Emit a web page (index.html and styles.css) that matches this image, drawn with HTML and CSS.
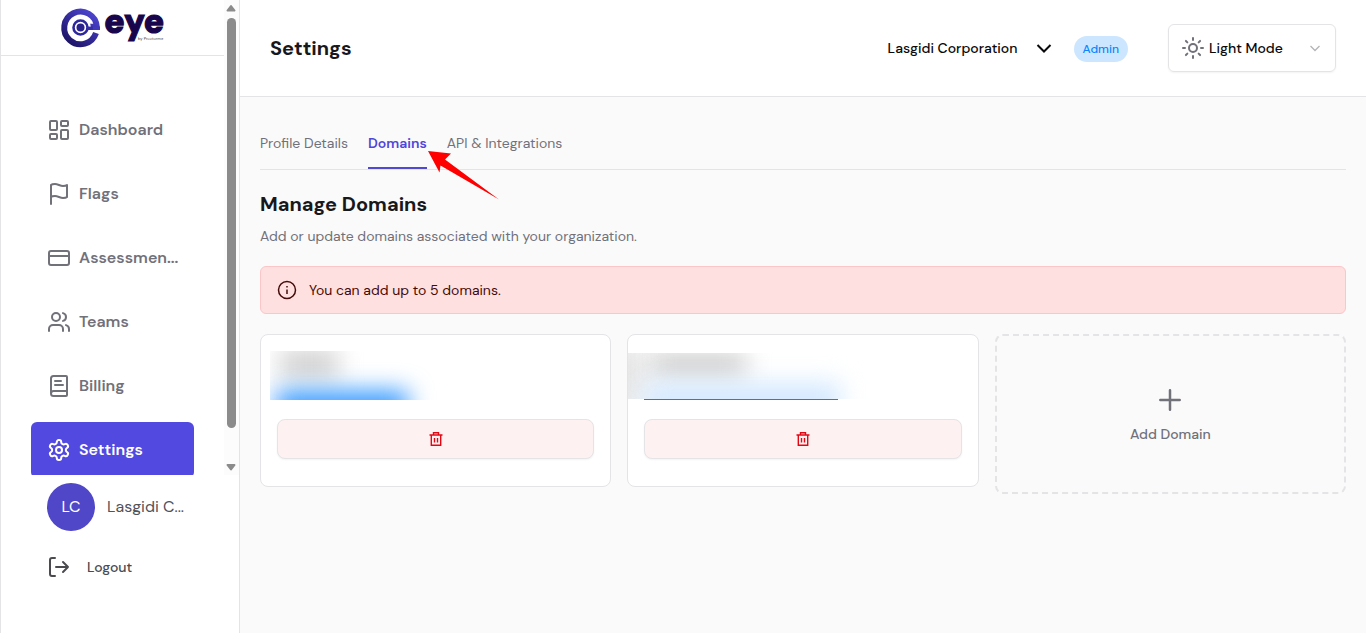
FILE: index.html
```html
<!DOCTYPE html>
<html lang="en">
<head>
<meta charset="utf-8">
<meta name="viewport" content="width=device-width, initial-scale=1">
<title>Settings</title>
<link rel="stylesheet" href="styles.css">
</head>
<body>
<div class="app">
  <aside class="sidebar">
    <div class="sidebar-scroll">
      <div class="sidebar-content">
        <a class="brand" href="#" aria-label="eye by Proctorme">
          <svg class="logo" width="108" height="40" viewBox="0 0 108 40">
            <defs>
              <linearGradient id="ring" x1="1" y1="0" x2="0.2" y2="1">
                <stop offset="0" stop-color="#5048d8"/>
                <stop offset="1" stop-color="#1e1468"/>
              </linearGradient>
            </defs>
            <path d="M35 25A16.300 16.300 0 1 1 35.800 18.800H26" fill="none" stroke="url(#ring)" stroke-width="6"/>
            <path d="M26 20.300h13" stroke="#4038bd" stroke-width="3.400"/>
            <circle cx="19.500" cy="19.500" r="10.300" fill="#fff"/>
            <circle cx="19.500" cy="19.500" r="7" fill="none" stroke="#2e269c" stroke-width="2.600"/>
            <circle cx="19.500" cy="19.500" r="4" fill="#2b218d"/>
            <path d="M26 20.300h6" stroke="#352caa" stroke-width="3.400"/>
            <text class="brand-name" x="43" y="25">eye</text>
            <text class="brand-by" x="77" y="32">by Proctorme</text>
          </svg>
        </a>
        <nav class="nav">
          <a class="nav-item" href="#">
            <svg class="icon" viewBox="0 0 24 24"><rect x="3" y="3" width="7" height="9" rx="1"/><rect x="14" y="3" width="7" height="5" rx="1"/><rect x="14" y="12" width="7" height="9" rx="1"/><rect x="3" y="16" width="7" height="5" rx="1"/></svg>
            <span class="nav-label">Dashboard</span>
          </a>
          <a class="nav-item" href="#">
            <svg class="icon" viewBox="0 0 24 24"><path d="M4 15s1-1 4-1 5 2 8 2 4-1 4-1V3s-1 1-4 1-5-2-8-2-4 1-4 1zM4 22v-7"/></svg>
            <span class="nav-label">Flags</span>
          </a>
          <a class="nav-item" href="#">
            <svg class="icon" viewBox="0 0 24 24"><rect x="2" y="5" width="20" height="14" rx="2"/><path d="M2 10h20"/></svg>
            <span class="nav-label">Assessmen...</span>
          </a>
          <a class="nav-item" href="#">
            <svg class="icon" viewBox="0 0 24 24"><path d="M16 21v-2a4 4 0 0 0-4-4H6a4 4 0 0 0-4 4v2"/><circle cx="9" cy="7" r="4"/><path d="M22 21v-2a4 4 0 0 0-3-3.870M16 3.130a4 4 0 0 1 0 7.750"/></svg>
            <span class="nav-label">Teams</span>
          </a>
          <a class="nav-item" href="#">
            <svg class="icon" viewBox="0 0 24 24"><path d="M4 19.500v-15A2.500 2.500 0 0 1 6.500 2H19a1 1 0 0 1 1 1v18a1 1 0 0 1-1 1H6.500a2.500 2.500 0 0 1-2.500-2.500A2.500 2.500 0 0 1 6.500 17H20M8 7h6M8 11h8"/></svg>
            <span class="nav-label">Billing</span>
          </a>
          <a class="nav-item nav-item-active" href="#" aria-current="page">
            <svg class="icon" viewBox="0 0 24 24"><path d="M12.220 2h-.440a2 2 0 0 0-2 2v.180a2 2 0 0 1-1 1.730l-.430.250a2 2 0 0 1-2 0l-.150-.080a2 2 0 0 0-2.730.730l-.220.380a2 2 0 0 0 .730 2.730l.150.100a2 2 0 0 1 1 1.720v.510a2 2 0 0 1-1 1.740l-.150.090a2 2 0 0 0-.730 2.730l.220.380a2 2 0 0 0 2.730.730l.150-.080a2 2 0 0 1 2 0l.430.250a2 2 0 0 1 1 1.730V20a2 2 0 0 0 2 2h.440a2 2 0 0 0 2-2v-.180a2 2 0 0 1 1-1.730l.430-.250a2 2 0 0 1 2 0l.150.080a2 2 0 0 0 2.730-.730l.220-.390a2 2 0 0 0-.730-2.730l-.150-.080a2 2 0 0 1-1-1.740v-.500a2 2 0 0 1 1-1.740l.150-.090a2 2 0 0 0 .730-2.730l-.220-.380a2 2 0 0 0-2.730-.730l-.150.080a2 2 0 0 1-2 0l-.430-.250a2 2 0 0 1-1-1.730V4a2 2 0 0 0-2-2z"/><circle cx="12" cy="12" r="3"/></svg>
            <span class="nav-label">Settings</span>
          </a>
        </nav>
      </div>
      <div class="scrollbar" aria-hidden="true">
        <svg width="10" height="8" viewBox="0 0 10 8"><path d="M5 2L8.500 6.500h-7z"/></svg>
        <div class="scrollbar-track"><div class="scrollbar-thumb"></div></div>
        <svg width="10" height="8" viewBox="0 0 10 8"><path d="M5 6.500L8.500 2h-7z"/></svg>
      </div>
    </div>
    <div class="account">
      <span class="avatar">LC</span>
      <span class="account-name">Lasgidi C...</span>
    </div>
    <button class="logout" type="button">
      <svg class="icon" viewBox="0 0 24 24"><path d="M8 3H5a2 2 0 0 0-2 2v14a2 2 0 0 0 2 2h3M9 12h12M16 7l5 5-5 5"/></svg>
      <span>Logout</span>
    </button>
  </aside>

  <div class="page">
    <header class="topbar">
      <h1 class="title">Settings</h1>
      <div class="org">
        <select class="org-select" aria-label="Organization"><option>Lasgidi Corporation</option></select>
        <svg class="org-chevron" viewBox="0 0 16 16"><path d="M1.500 5L8 11.500 14.500 5"/></svg>
      </div>
      <span class="badge">Admin</span>
      <div class="mode">
        <svg class="icon" viewBox="0 0 24 24"><circle cx="12" cy="12" r="4"/><path d="M12 2v2M12 20v2M4.930 4.930l1.410 1.410M17.660 17.660l1.410 1.410M2 12h2M20 12h2M6.340 17.660l-1.410 1.410M19.070 4.930l-1.410 1.410"/></svg>
        <select class="mode-select" aria-label="Theme"><option>Light Mode</option></select>
        <svg class="mode-chevron" viewBox="0 0 16 16"><path d="M3.500 6L8 10.500 12.500 6"/></svg>
      </div>
    </header>

    <main class="content">
      <nav class="tabs">
        <a class="tab" href="#">Profile Details</a>
        <a class="tab tab-active" href="#" aria-current="true">Domains
          <svg class="pointer" width="72" height="50" viewBox="0 0 72 50" aria-hidden="true"><path d="M0 0L23 2.500 17 8.500 71 48.500 12.500 14.500 11.500 21.500z"/></svg>
        </a>
        <a class="tab" href="#">API &amp; Integrations</a>
      </nav>
      <h2 class="heading">Manage Domains</h2>
      <p class="subheading">Add or update domains associated with your organization.</p>
      <div class="alert">
        <svg class="alert-icon" viewBox="0 0 20 20"><circle cx="10" cy="10" r="8.500"/><path d="M10 9.500v4.500M10 6v1.500"/></svg>
        <span>You can add up to 5 domains.</span>
      </div>
      <div class="domains">
        <article class="domain">
          <div class="domain-info">
            <div class="redacted redacted-first"><i class="smear smear-name"></i><i class="smear smear-link"></i></div>
          </div>
          <button class="delete" type="button" aria-label="Delete domain">
            <svg class="trash" viewBox="0 0 16 16"><path d="M1.500 4h13M5.500 4V1.700h5V4M3.300 4v10.300h9.400V4M6.500 7v4.500M9.500 7v4.500"/></svg>
          </button>
        </article>
        <article class="domain">
          <div class="domain-info">
            <div class="redacted redacted-second"><i class="smear smear-edge"></i><i class="smear smear-name"></i><i class="smear smear-link"></i></div>
            <div class="link-line"></div>
          </div>
          <button class="delete" type="button" aria-label="Delete domain">
            <svg class="trash" viewBox="0 0 16 16"><path d="M1.500 4h13M5.500 4V1.700h5V4M3.300 4v10.300h9.400V4M6.500 7v4.500M9.500 7v4.500"/></svg>
          </button>
        </article>
        <button class="add" type="button">
          <svg class="plus" viewBox="0 0 32 32"><path d="M16 6.300v19.400M6.300 16h19.400"/></svg>
          <span>Add Domain</span>
        </button>
      </div>
    </main>
  </div>
</div>
</body>
</html>
```
FILE: styles.css
```css
* { box-sizing: border-box; }

body {
  margin: 0;
  background: #fafafa;
  color: #18181b;
  font-family: "DM Sans", Inter, "Liberation Sans", sans-serif;
  font-size: 14px;
  line-height: 20px;
}

a { color: inherit; text-decoration: none; }
button, select { font: inherit; color: inherit; }
h1, h2, p { margin: 0; }

.app { display: flex; min-height: 100vh; }

.icon {
  width: 24px;
  height: 24px;
  flex: none;
  fill: none;
  stroke: currentColor;
  stroke-width: 2;
  stroke-linecap: round;
  stroke-linejoin: round;
}

/* Sidebar */
.sidebar {
  flex: none;
  width: 240px;
  background: #fff;
  border: solid #e4e4e7;
  border-width: 0 1px;
}
.sidebar-scroll { display: flex; height: 475px; overflow: hidden; }
.sidebar-content { flex: 1; min-width: 0; }
.brand {
  display: flex;
  height: 56px;
  padding: 8px 0 0 60px;
  border-bottom: 1px solid #e4e4e7;
}
.logo { overflow: visible; }
.brand-name {
  font: 900 34px "DM Sans", Inter, sans-serif;
  fill: #18054c;
  stroke: #18054c;
  stroke-width: 1.2;
}
.brand-by { font: 4px "DM Sans", Inter, sans-serif; fill: #444; }
.nav {
  display: flex;
  flex-direction: column;
  gap: 8px;
  padding: 46px 30px 0;
}
.nav-item {
  display: flex;
  align-items: center;
  gap: 8px;
  height: 56px;
  padding: 0 16px;
  border-radius: 6px;
  color: #71717a;
  font-size: 16px;
  font-weight: 600;
}
.nav-label { white-space: nowrap; }
.nav-item-active { background: #5149e0; color: #fff; }

.scrollbar {
  display: flex;
  flex-direction: column;
  align-items: center;
  flex: none;
  width: 15px;
  padding: 4px 1px 4px 0;
  background: #fcfcfc;
}
.scrollbar svg {
  fill: #8b8b8b;
  stroke: #8b8b8b;
  stroke-width: 2;
  stroke-linejoin: round;
}
.scrollbar-track { flex: 1; padding-top: 6px; }
.scrollbar-thumb { width: 9px; height: 410px; border-radius: 5px; background: #8b8b8b; }

.account {
  display: flex;
  align-items: center;
  gap: 12px;
  padding: 8px 16px 0 46px;
  color: #52525b;
  font-size: 16px;
}
.avatar {
  display: grid;
  place-items: center;
  width: 48px;
  height: 48px;
  border-radius: 50%;
  background: #4f46c8;
  color: #fff;
}
.logout {
  display: flex;
  align-items: center;
  gap: 16px;
  margin-top: 24px;
  padding: 0 46px;
  border: 0;
  background: none;
  color: #4b4b4f;
  font-weight: 500;
}

/* Top bar */
.page { flex: 1; min-width: 0; }
.topbar {
  display: flex;
  align-items: center;
  height: 97px;
  padding: 0 30px;
  background: #fff;
  border-bottom: 1px solid #e4e4e7;
}
.title { flex: 1; font-size: 20px; line-height: 28px; font-weight: 700; }
.org { display: flex; align-items: center; color: #09090b; font-weight: 500; }
.org-select, .mode-select {
  appearance: none;
  padding: 0;
  border: 0;
  background: none;
}
.org-select { width: 148px; }
.org-chevron {
  width: 16px;
  height: 16px;
  fill: none;
  stroke: #09090b;
  stroke-width: 2;
}
.badge {
  margin: 2px 40px 0 22px;
  padding: 3px 9px;
  border-radius: 13px;
  background: #cce6ff;
  color: #0a84ff;
  font-size: 12px;
  font-weight: 500;
}
.mode {
  display: flex;
  align-items: center;
  gap: 4px;
  width: 168px;
  height: 48px;
  padding: 0 12px;
  border: 1px solid #e4e4e7;
  border-radius: 6px;
  box-shadow: 0 1px 2px rgba(0, 0, 0, 0.05);
  color: #09090b;
  font-weight: 500;
}
.mode .icon { color: #71717a; }
.mode-select { flex: 1; min-width: 0; }
.mode-chevron { width: 16px; height: 16px; fill: none; stroke: #b4b4b8; stroke-width: 1.3; }

/* Content */
.content { padding: 20px; }
.tabs { display: flex; gap: 20px; border-bottom: 1px solid #e4e4e7; }
.tab { height: 52px; padding-top: 16px; color: #71717a; }
.tab-active {
  position: relative;
  border-bottom: 2px solid #5149d0;
  color: #5046d8;
  font-weight: 600;
}
.pointer { position: absolute; top: 34px; left: 60px; fill: #f00; z-index: 1; }
.heading { margin-top: 20px; font-size: 20px; line-height: 28px; font-weight: 700; }
.subheading { margin-top: 8px; color: #71717a; }
.alert {
  display: flex;
  align-items: center;
  gap: 12px;
  height: 48px;
  margin: 20px 0;
  padding: 0 16px;
  border: 1px solid #fcc5c8;
  border-radius: 6px;
  background: #ffe0e0;
  color: #450a0a;
}
.alert-icon { width: 20px; height: 20px; fill: none; stroke: #450a0a; stroke-width: 1.5; }

.domains {
  display: grid;
  grid-template-columns: repeat(3, minmax(0, 1fr));
  align-items: start;
  gap: 16px;
}
.domain {
  padding: 16px 16px 27px;
  border: 1px solid #e4e4e7;
  border-radius: 8px;
  background: #fff;
}
.domain-info { position: relative; height: 52px; margin-bottom: 16px; }
.redacted { position: absolute; overflow: hidden; }
.redacted-first { top: 0; left: -7px; width: 170px; height: 49px; }
.redacted-second { top: 2px; left: -16px; width: 240px; height: 46px; }
.smear { position: absolute; filter: blur(12px); }
.redacted-first .smear-name { top: 0; left: 10px; width: 58px; height: 26px; background: #ccc; }
.redacted-first .smear-link { top: 40px; left: 6px; width: 132px; height: 30px; background: #3096ff; }
.redacted-second .smear-edge { top: -10px; left: -20px; width: 36px; height: 70px; background: #e6e6e6; }
.redacted-second .smear-name { top: 0; left: 22px; width: 96px; height: 24px; background: #ccc; }
.redacted-second .smear-link { top: 30px; left: 16px; width: 196px; height: 36px; background: #d3e8ff; }
.link-line { position: absolute; top: 48px; left: 0; width: 194px; height: 1px; background: #0a84ff; }

.delete {
  display: grid;
  place-items: center;
  width: 100%;
  height: 40px;
  padding: 0;
  border: 1px solid #e4e4e7;
  border-radius: 8px;
  background: #fef1f1;
  box-shadow: 0 1px 2px rgba(0, 0, 0, 0.05);
}
.trash { width: 16px; height: 16px; fill: none; stroke: #e30613; stroke-width: 1.4; }
.add {
  display: flex;
  flex-direction: column;
  align-items: center;
  justify-content: center;
  gap: 8px;
  height: 160px;
  border: 2px dashed #e4e4e7;
  border-radius: 8px;
  background: none;
  color: #71717a;
  font-weight: 500;
}
.plus {
  width: 32px;
  height: 32px;
  fill: none;
  stroke: currentColor;
  stroke-width: 2.5;
  stroke-linecap: round;
}
```
